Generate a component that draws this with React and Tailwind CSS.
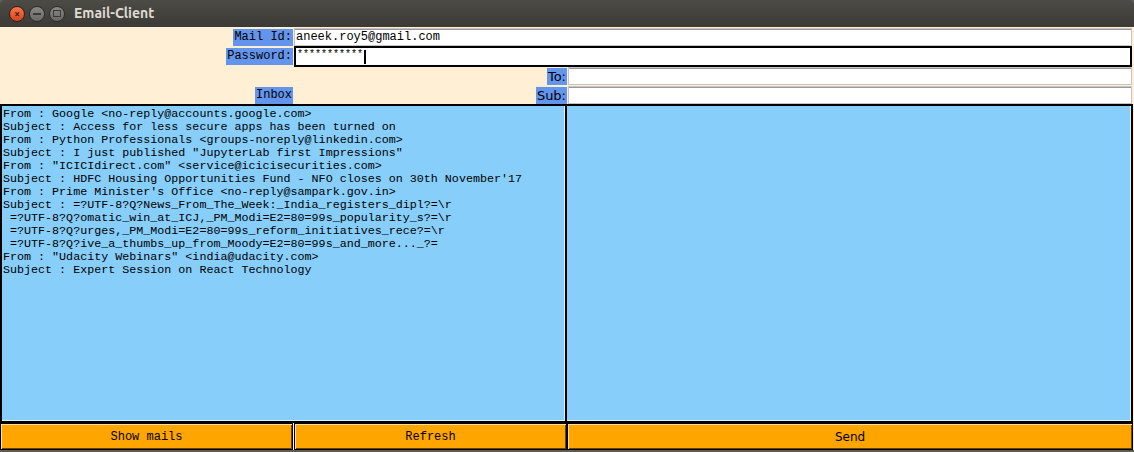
const mono = { fontFamily: '"Liberation Mono", "DejaVu Sans Mono", monospace' };

const mails = [
    'From : Google <no-reply@accounts.google.com>',
    'Subject : Access for less secure apps has been turned on',
    'From : Python Professionals <groups-noreply@linkedin.com>',
    'Subject : I just published "JupyterLab first Impressions"',
    'From : "ICICIdirect.com" <service@icicisecurities.com>',
    "Subject : HDFC Housing Opportunities Fund - NFO closes on 30th November'17",
    "From : Prime Minister's Office <no-reply@sampark.gov.in>",
    'Subject : =?UTF-8?Q?News_From_The_Week:_India_registers_dipl?=\\r',
    ' =?UTF-8?Q?omatic_win_at_ICJ,_PM_Modi=E2=80=99s_popularity_s?=\\r',
    ' =?UTF-8?Q?urges,_PM_Modi=E2=80=99s_reform_initiatives_rece?=\\r',
    ' =?UTF-8?Q?ive_a_thumbs_up_from_Moody=E2=80=99s_and_more..._?=',
    'From : "Udacity Webinars" <india@udacity.com>',
    'Subject : Expert Session on React Technology',
];

const TitleBar = () => (
    <div className="h-[27px] flex items-center bg-gradient-to-b from-[#4d4b45] to-[#3b3a36] rounded-t-[5px]">
        {/* window controls */}
        <div className="flex items-center gap-[4px] ml-[9px]">
            <div className="w-[16px] h-[16px] rounded-full bg-gradient-to-b from-[#f5774d] to-[#d9431d] border border-[#3a1f14] flex items-center justify-center text-[#4a1a0a] text-[10px] font-bold leading-none">×</div>
            <div className="w-[16px] h-[16px] rounded-full bg-gradient-to-b from-[#8a8883] to-[#6a6864] border border-[#2f2e2b] flex items-center justify-center">
                <div className="w-[8px] h-[2px] bg-[#3a3936]"></div>
            </div>
            <div className="w-[16px] h-[16px] rounded-full bg-gradient-to-b from-[#8a8883] to-[#6a6864] border border-[#2f2e2b] flex items-center justify-center">
                <div className="w-[8px] h-[7px] border-[1.5px] border-[#3a3936]"></div>
            </div>
        </div>
        <span className="ml-[9px] text-[14px] font-bold text-[#dfdbd2]" style={{ fontFamily: 'Ubuntu, "Noto Sans", "DejaVu Sans", sans-serif' }}>Email-Client</span>
    </div>
);

const Label = ({ children, sans, className = '' }) => (
    <div
        className={`justify-self-end self-center bg-[#6495ED] text-black leading-[17px] h-[17px] px-[1px] ${sans ? 'text-[13px]' : 'text-[12px]'} ${className}`}
        style={sans ? { fontFamily: 'Tahoma, "DejaVu Sans", sans-serif' } : mono}
    >
        {children}
    </div>
);

const Entry = ({ children, focused, className = '' }) => (
    <div
        className={`bg-white mr-[2px] flex items-center px-[1px] text-[12px] text-black ${focused ? 'border-2 border-black' : 'border border-[#c4c4c4] shadow-[inset_0_1px_0_#9a9a9a]'} ${className}`}
        style={mono}
    >
        {children}
    </div>
);

const ActionButton = ({ children, sans, className = '' }) => (
    <div
        className={`bg-[#FFA500] border border-black shadow-[inset_1px_1px_0_#ffe0a0,inset_-1px_-1px_0_#6b4500] flex items-center justify-center text-[12px] text-black ${className}`}
        style={sans ? { fontFamily: 'Tahoma, "DejaVu Sans", sans-serif' } : mono}
    >
        {children}
    </div>
);

export default function App() {
    return (
        <div className="w-[1134px] h-[452px] bg-[#5c5c5c] overflow-hidden">
            <TitleBar />
            <div className="grid grid-cols-[293px_274px_567px] grid-rows-[19px_21px_19px_18px_319px_27px] bg-[#FFEFD5]">
                {/* Mail Id */}
                <Label className="mt-[1px]">Mail Id:</Label>
                <Entry className="col-span-2 mt-[1px] h-[18px] ml-[1px]">aneek.roy5@gmail.com</Entry>

                {/* Password */}
                <Label>Password:</Label>
                <Entry focused className="col-span-2 h-[21px] ml-[1px]">
                    <span className="text-[10px] leading-none -mt-[3px]">***********</span>
                    <span className="w-[2px] h-[14px] bg-black ml-[1px]"></span>
                </Entry>

                {/* To */}
                <div></div>
                <Label sans>To:</Label>
                <Entry className="h-[18px] ml-[1px]"></Entry>

                {/* Inbox / Sub */}
                <Label className="mt-[1px]">Inbox</Label>
                <Label sans className="mt-[1px]">Sub:</Label>
                <Entry className="h-[18px] ml-[1px]"></Entry>

                {/* Mail list */}
                <div
                    className="col-span-2 bg-[#87CEFA] border-2 border-black shadow-[inset_-1px_-1px_0_#d8f3ff] pl-[1px] pt-[2px] text-[11.7px] leading-[13px] text-black whitespace-pre overflow-hidden"
                    style={mono}
                >
                    {mails.map((line, i) => (
                        <div key={i}>{line}</div>
                    ))}
                </div>
                <div className="bg-[#87CEFA] border-2 border-l-0 border-black shadow-[inset_-1px_-1px_0_#d8f3ff] mr-[1px]"></div>

                {/* Buttons */}
                <ActionButton>Show mails</ActionButton>
                <ActionButton className="ml-[1px]">Refresh</ActionButton>
                <ActionButton sans className="mr-[1px]">Send</ActionButton>
            </div>
        </div>
    );
}
